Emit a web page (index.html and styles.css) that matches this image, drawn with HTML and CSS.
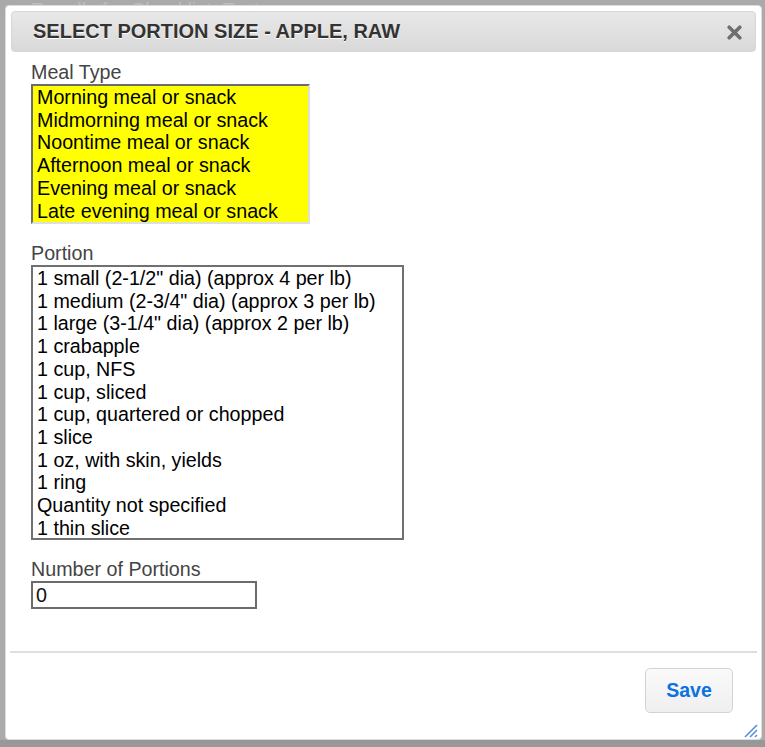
FILE: index.html
```html
<!DOCTYPE html>
<html lang="en">
<head>
  <meta charset="UTF-8" />
  <title>Select Portion Size</title>
  <link rel="stylesheet" href="styles.css">
</head>
<body>
  <div class="page">
    <div class="page-title">&raquo; Recalls for Checklist, Test</div>
  </div>

  <div class="dialog">
    <div class="titlebar">
      <span class="title">SELECT PORTION SIZE - APPLE, RAW</span>
      <svg class="close" width="15" height="15" viewBox="0 0 15 15">
        <path d="M2.2 2.2 L12.8 12.8 M12.8 2.2 L2.2 12.8" stroke="#6f6f6f" stroke-width="3.6" stroke-linecap="round" />
      </svg>
    </div>

    <div class="content">
      <div class="field">
        <div class="label">Meal Type</div>
        <div class="listbox meal">
          <div class="option">Morning meal or snack</div>
          <div class="option">Midmorning meal or snack</div>
          <div class="option">Noontime meal or snack</div>
          <div class="option">Afternoon meal or snack</div>
          <div class="option">Evening meal or snack</div>
          <div class="option">Late evening meal or snack</div>
        </div>
      </div>

      <div class="field">
        <div class="label">Portion</div>
        <div class="listbox portion">
          <div class="option">1 small (2-1/2" dia) (approx 4 per lb)</div>
          <div class="option">1 medium (2-3/4" dia) (approx 3 per lb)</div>
          <div class="option">1 large (3-1/4" dia) (approx 2 per lb)</div>
          <div class="option">1 crabapple</div>
          <div class="option">1 cup, NFS</div>
          <div class="option">1 cup, sliced</div>
          <div class="option">1 cup, quartered or chopped</div>
          <div class="option">1 slice</div>
          <div class="option">1 oz, with skin, yields</div>
          <div class="option">1 ring</div>
          <div class="option">Quantity not specified</div>
          <div class="option">1 thin slice</div>
        </div>
      </div>

      <div class="field">
        <div class="label">Number of Portions</div>
        <input class="count" type="text" value="0">
      </div>
    </div>

    <div class="buttonpane">
      <button class="save">Save</button>
    </div>

    <svg class="grip" width="14" height="14" viewBox="0 0 14 14">
      <path d="M1 13 L13 1 M6 13 L13 6 M11 13 L13 11" stroke="#5b8fdc" stroke-width="1.6" />
    </svg>
  </div>
</body>
</html>
```

FILE: styles.css
```css
html {
  background: linear-gradient(#aaa 740px, #989898 740px);
  min-height: 100%;
}
body {
  margin: 0;
  font-family: "Liberation Sans", Arial, sans-serif;
  height: 747px;
  overflow: hidden;
}
.page { padding: 0 14px; }
.page-title {
  padding-top: 0;
  font-size: 20px;
  line-height: 20px;
  color: #bdbdbd;
}

.dialog {
  position: absolute;
  left: 5px;
  top: 5px;
  width: 757px;
  height: 735px;
  box-sizing: border-box;
  background: #fff;
  border: 1px solid #dcdcdc;
  border-radius: 4px;
  padding: 5px;
}
.titlebar {
  display: flex;
  align-items: center;
  justify-content: space-between;
  height: 41px;
  box-sizing: border-box;
  padding: 0 13px 0 21px;
  border: 1px solid #d6d6d6;
  border-radius: 4px;
  background: linear-gradient(#e8e8e8, #d9d9d9);
}
.title {
  font-size: 20px;
  font-weight: bold;
  color: #333;
  text-shadow: 0 1px 0 #fff;
}
.close { margin-top: 1px; }

.content { padding: 9px 0 0 20px; }
.field + .field { margin-top: 18px; }
.label {
  font-size: 19.7px;
  line-height: 23px;
  color: #444;
}
.listbox {
  box-sizing: border-box;
  font-size: 19.7px;
  line-height: 22.7px;
  color: #000;
  overflow: hidden;
}
.option { padding: 0 4px; white-space: nowrap; }
.listbox.meal {
  width: 279px;
  height: 140px;
  background: #ff0;
  border: 2px solid;
  border-color: #6b6b6b #dedede #dedede #6b6b6b;
}
.listbox.portion {
  width: 373px;
  height: 275px;
  border: 2px solid #707070;
}
.count {
  display: block;
  width: 226px;
  height: 28px;
  box-sizing: border-box;
  margin: 0;
  border: 2px solid #6b6b6b;
  padding: 0 4px 0 3px;
  font-family: "Liberation Sans", Arial, sans-serif;
  font-size: 19.7px;
  color: #111;
  outline: none;
}

.buttonpane {
  margin: 42px -1px 0 -1px;
  border-top: 2px solid #dedede;
  padding: 15px 24px 0 0;
  display: flex;
  justify-content: flex-end;
}
.save {
  width: 88px;
  height: 45px;
  border: 1px solid #d3d3d3;
  border-radius: 5px;
  background: linear-gradient(#fafafa, #efefef);
  font-family: "Liberation Sans", Arial, sans-serif;
  font-size: 19.5px;
  font-weight: bold;
  color: #0a73e0;
}
.grip {
  position: absolute;
  right: 3px;
  bottom: 1px;
}
```
